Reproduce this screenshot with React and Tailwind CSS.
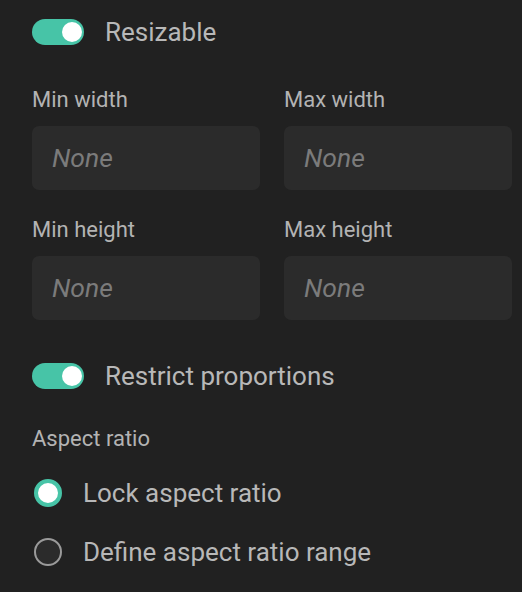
import React from "react";

function Toggle() {
  return (
    <div className="relative w-[52px] h-[26px] rounded-full bg-[#47c4a7] shrink-0">
      <div className="absolute right-[2px] top-[3px] w-[20px] h-[20px] rounded-full bg-white" />
    </div>
  );
}

function Field({ label }) {
  return (
    <div className="flex flex-col">
      <div className="h-[24px] leading-[24px] text-[22px] text-[#b3b3b3]">{label}</div>
      <div className="mt-[14px] h-[64px] rounded-[7px] bg-[#2b2b2b] flex items-center pl-[20px]">
        <span className="italic text-[26.5px] text-[#7b7b7b]">None</span>
      </div>
    </div>
  );
}

export default function App() {
  return (
    <div
      className="w-[522px] h-[592px] bg-[#212121] pl-[32px] pr-[10px] pt-[12px] overflow-hidden"
      style={{ fontFamily: "Roboto, 'Noto Sans', sans-serif" }}
    >
      <div className="h-[40px] flex items-center gap-[21px]">
        <Toggle />
        <span className="text-[26px] text-[#b8b8b8]">Resizable</span>
      </div>
      <div className="mt-[36px] grid grid-cols-2 gap-x-[24px] gap-y-[28px]">
        <Field label="Min width" />
        <Field label="Max width" />
        <Field label="Min height" />
        <Field label="Max height" />
      </div>
      <div className="mt-[36px] h-[40px] flex items-center gap-[21px]">
        <Toggle />
        <span className="text-[26px] text-[#b8b8b8]">Restrict proportions</span>
      </div>
      <div className="mt-[31px] h-[24px] leading-[24px] text-[22px] text-[#b3b3b3]">Aspect ratio</div>
      <div className="mt-[22px] h-[40px] flex items-center">
        <div className="w-[28px] h-[28px] rounded-full border-[4px] border-[#47c4a7] bg-white ml-[2px]" />
        <span className="ml-[21px] text-[26px] text-[#b8b8b8]">Lock aspect ratio</span>
      </div>
      <div className="mt-[19px] h-[40px] flex items-center">
        <div className="w-[28px] h-[28px] rounded-full border-2 border-[#9a9a9a] bg-[#2b2b2b] ml-[2px]" />
        <span className="ml-[21px] text-[26px] text-[#b8b8b8]">Define aspect ratio range</span>
      </div>
    </div>
  );
}
